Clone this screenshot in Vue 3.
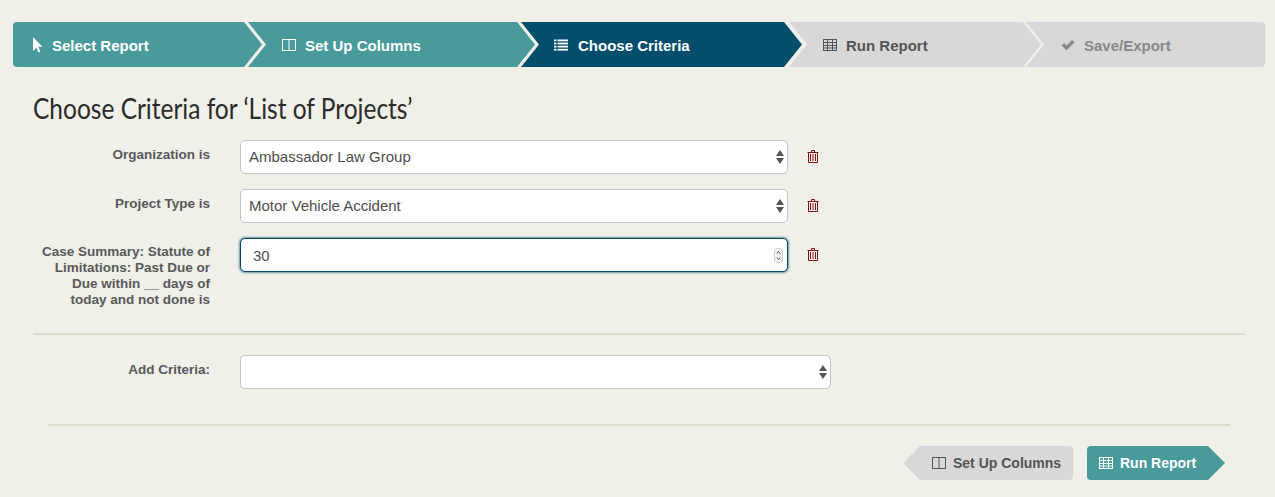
<script setup>
import { ref } from 'vue'

const steps = [
  { label: 'Select Report', icon: 'cursor', cls: 'done s1' },
  { label: 'Set Up Columns', icon: 'columns', cls: 'done s2' },
  { label: 'Choose Criteria', icon: 'list', cls: 'current s3' },
  { label: 'Run Report', icon: 'table', cls: 'todo s4' },
  { label: 'Save/Export', icon: 'check', cls: 'off s5' }
]
const trashPath = 'M4.5 2 V.5 H7.5 V2 M.5 2.5 H11.5 M1.5 2.5 V12.5 H10.5 V2.5 M3.5 4 V11 M6 4 V11 M8.5 4 V11'
const org = ref('Ambassador Law Group')
const type = ref('Motor Vehicle Accident')
const days = ref(30)
</script>

<template>
  <div class="page">
    <nav class="wizard">
      <div v-for="s in steps" :key="s.label" class="step" :class="s.cls">
        <svg class="ico" viewBox="0 0 14 14" width="14" height="14">
          <path v-if="s.icon === 'cursor'" d="M3 -1 L12.5 8.8 L8.4 8.8 L10.4 13.4 L8.4 14.4 L6.4 9.8 L3 13 Z" fill="currentColor" />
          <g v-else-if="s.icon === 'columns'" fill="none" stroke="currentColor">
            <rect x="0.5" y="1.5" width="13" height="11" /><path d="M7 1.5 V12.5" />
          </g>
          <g v-else-if="s.icon === 'list'" fill="currentColor">
            <rect x="0" y="1.5" width="2.5" height="1.8" /><rect x="3.5" y="1.5" width="10.5" height="1.8" />
            <rect x="0" y="4.6" width="2.5" height="1.8" /><rect x="3.5" y="4.6" width="10.5" height="1.8" />
            <rect x="0" y="7.7" width="2.5" height="1.8" /><rect x="3.5" y="7.7" width="10.5" height="1.8" />
            <rect x="0" y="10.8" width="2.5" height="1.8" /><rect x="3.5" y="10.8" width="10.5" height="1.8" />
          </g>
          <g v-else-if="s.icon === 'table'" fill="none" stroke="currentColor">
            <rect x="0.5" y="1.5" width="13" height="11" /><path d="M0.5 4.5 H13.5 M0.5 7.5 H13.5 M0.5 10 H13.5 M4.5 1.5 V12.5 M9.5 1.5 V12.5" />
          </g>
          <path v-else d="M0.5 7.5 L3 5 L5.5 7.5 L11 2 L13.5 4.5 L5.5 12.2 Z" fill="currentColor" />
        </svg>
        <span>{{ s.label }}</span>
      </div>
    </nav>

    <main class="content">
      <h1><span>Choose Criteria for ‘List of Projects’</span></h1>

      <div class="row">
        <label>Organization is</label>
        <div class="field">
          <select v-model="org"><option>Ambassador Law Group</option></select>
          <svg class="updown" viewBox="0 0 8 14" width="8" height="14"><path d="M4 0 L8 6 H0 Z M4 14 L0 8 H8 Z" fill="#555" /></svg>
        </div>
        <svg class="trash" viewBox="0 0 12 13" width="12" height="13"><path :d="trashPath" fill="none" stroke="#7e1015" /></svg>
      </div>

      <div class="row">
        <label>Project Type is</label>
        <div class="field">
          <select v-model="type"><option>Motor Vehicle Accident</option></select>
          <svg class="updown" viewBox="0 0 8 14" width="8" height="14"><path d="M4 0 L8 6 H0 Z M4 14 L0 8 H8 Z" fill="#555" /></svg>
        </div>
        <svg class="trash" viewBox="0 0 12 13" width="12" height="13"><path :d="trashPath" fill="none" stroke="#7e1015" /></svg>
      </div>

      <div class="row last">
        <label>Case Summary: Statute of Limitations: Past Due or Due within __ days of today and not done is</label>
        <div class="field">
          <input v-model="days" type="number" />
          <svg class="spin" viewBox="0 0 9 15" width="9" height="15"><rect x=".5" y=".5" width="8" height="14" rx="3.5" fill="#f4f4f4" stroke="#ccc" /><path d="M2.8 5.6 L4.5 3.4 L6.2 5.6 M2.8 9.4 L4.5 11.6 L6.2 9.4" fill="none" stroke="#555" /></svg>
        </div>
        <svg class="trash" viewBox="0 0 12 13" width="12" height="13"><path :d="trashPath" fill="none" stroke="#7e1015" /></svg>
      </div>

      <hr class="rule" />

      <div class="row add">
        <label>Add Criteria:</label>
        <div class="field wide">
          <select></select>
          <svg class="updown" viewBox="0 0 8 14" width="8" height="14"><path d="M4 0 L8 6 H0 Z M4 14 L0 8 H8 Z" fill="#555" /></svg>
        </div>
      </div>

      <footer class="actions">
        <button class="btn back">
          <svg viewBox="0 0 14 14" width="14" height="14"><g fill="none" stroke="currentColor"><rect x="0.5" y="1.5" width="13" height="11" /><path d="M7 1.5 V12.5" /></g></svg>
          Set Up Columns
        </button>
        <button class="btn next">
          <svg viewBox="0 0 14 14" width="14" height="14"><g fill="none" stroke="currentColor"><rect x="0.5" y="1.5" width="13" height="11" /><path d="M0.5 4.5 H13.5 M0.5 7.5 H13.5 M0.5 10 H13.5 M4.5 1.5 V12.5 M9.5 1.5 V12.5" /></g></svg>
          Run Report
        </button>
      </footer>
    </main>
  </div>
</template>

<style>
html, body { margin: 0; background: #f0efe8; }
</style>

<style scoped>
.page {
  height: 497px;
  overflow: hidden;
  padding: 22px 10px 0 13px;
  box-sizing: border-box;
  background: #f0efe8;
  font-family: "Liberation Sans", Arial, sans-serif;
}

.wizard { display: flex; height: 45px; }
.step {
  display: flex;
  align-items: center;
  gap: 6px;
  box-sizing: border-box;
  font-size: 15px;
  font-weight: 700;
  padding-top: 1px;
  --tip: 18px;
  clip-path: polygon(0 0, calc(100% - var(--tip)) 0, 100% 50%, calc(100% - var(--tip)) 100%, 0 100%, var(--tip) 50%);
}
.ico { flex: none; overflow: visible; }
.done { background: #489a9b; color: #fff; }
.current { background: #004d6c; color: #fff; }
.todo { background: #d8d8d8; color: #555; }
.off { background: #d8d8d8; color: #888; }
.s1 { width: 249px; padding-left: 17px; gap: 8px; border-radius: 4px 0 0 4px; clip-path: polygon(0 0, calc(100% - 18px) 0, 100% 50%, calc(100% - 18px) 100%, 0 100%); }
.s2 { width: 287px; margin-left: -14px; padding-left: 34px; gap: 9px; }
.s3 { width: 281px; margin-left: -14px; padding-left: 33px; gap: 10px; }
.s4 { width: 252px; margin-left: -13px; padding-left: 34px; gap: 9px; }
.s5 { width: 239px; margin-left: -15px; padding-left: 35px; gap: 9px; border-radius: 0 4px 4px 0; clip-path: polygon(0 0, 100% 0, 100% 100%, 0 100%, 18px 50%); }

.content { padding: 0 20px; }
h1 {
  margin: 24px 0 0;
  height: 49px;
  font-family: Lato, sans-serif;
  font-size: 28px;
  line-height: 34px;
  font-weight: 400;
  color: #2b2b2b;
  white-space: nowrap;
}
h1 span {
  display: inline-block;
  transform: scaleX(.875);
  transform-origin: left center;
}

.row {
  display: flex;
  align-items: flex-start;
  height: 49px;
}
.row.last { height: 95px; }
.row.add { height: 69px; }
.row label {
  width: 170px;
  margin: 0 30px 0 7px;
  padding-top: 7px;
  text-align: right;
  font-size: 13.5px;
  line-height: 16px;
  font-weight: 700;
  color: #58595b;
}
.row.last label { padding-top: 6px; }
.field { position: relative; width: 548px; height: 34px; }
.field.wide { width: 591px; }
select, input {
  display: block;
  width: 100%;
  height: 100%;
  box-sizing: border-box;
  appearance: none;
  -moz-appearance: textfield;
  background: #fff;
  border: 1px solid #c6c6c6;
  border-radius: 5px;
  padding: 0 8px 2px;
  font-family: "Liberation Sans", Arial, sans-serif;
  font-size: 15px;
  color: #4d4d4d;
  outline: none;
}
input {
  padding: 0 0 0 12px;
  border: 1px solid #004d6c;
  box-shadow: 0 0 2px 1px rgba(0, 77, 108, .55);
}
input::-webkit-outer-spin-button,
input::-webkit-inner-spin-button { appearance: none; margin: 0; }
.updown { position: absolute; right: 4px; top: 10px; }
.spin { position: absolute; right: 5px; top: 10px; }
.trash { margin: 10px 0 0 19px; flex: none; }

.rule {
  margin: 0 0 20px;
  border: 0;
  height: 2px;
  background: #dcddca;
}

.actions {
  display: flex;
  justify-content: flex-end;
  gap: 14px;
  margin: 0 15px;
  padding: 20px 5px 0 0;
  border-top: 2px solid #dcddca;
}
.btn {
  display: flex;
  align-items: center;
  gap: 7px;
  height: 34px;
  border: 0;
  font-family: "Liberation Sans", Arial, sans-serif;
  font-size: 14px;
  font-weight: 700;
}
.back {
  width: 170px;
  padding-left: 29px;
  background: #d8d8d8;
  color: #555;
  border-radius: 0 4px 4px 0;
  clip-path: polygon(17px 0, 100% 0, 100% 100%, 17px 100%, 0 50%);
}
.next {
  width: 138px;
  padding-left: 12px;
  background: #489a9b;
  color: #fff;
  border-radius: 4px 0 0 4px;
  clip-path: polygon(0 0, calc(100% - 17px) 0, 100% 50%, calc(100% - 17px) 100%, 0 100%);
}
</style>
